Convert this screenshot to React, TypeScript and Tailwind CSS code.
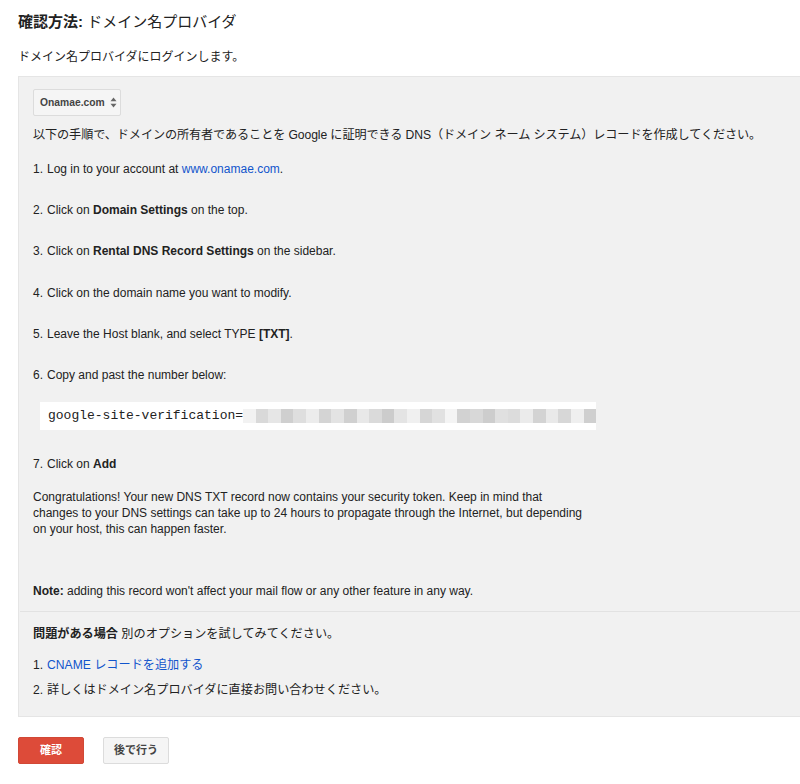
import React from "react";

const FONT = {
  fontFamily:
    '"Liberation Sans", Arial, "Noto Sans CJK JP", sans-serif',
};

const BLUR = [
  "#f2f2f2", "#d9d9d9", "#e6e6e6", "#cfcfcf", "#dedede", "#ececec", "#d4d4d4", "#e3e3e3",
  "#d0d0d0", "#e8e8e8", "#dadada", "#cccccc", "#e4e4e4", "#f0f0f0", "#d6d6d6", "#e1e1e1",
  "#f4f4f4", "#d2d2d2", "#d8d8d8", "#cdcdcd", "#e0e0e0", "#dcdcdc", "#ebebeb", "#d3d3d3",
  "#e9e9e9", "#d7d7d7", "#efefef", "#cfcfcf",
];

function Step({ n, children }: { n: number; children: React.ReactNode }) {
  return (
    <li className="flex h-[17px] items-center">
      <span className="w-[14px] shrink-0">{n}.</span>
      <span>{children}</span>
    </li>
  );
}

export default function App() {
  return (
    <div style={FONT} className="min-h-screen bg-white text-[12px] text-[#222]">
      <div className="pt-[13px] pl-[18px]">
        <h1 className="text-[15px] leading-[18px]">
          <span className="font-bold">確認方法:</span> ドメイン名プロバイダ
        </h1>
        <p className="mt-[18px] text-[12px] leading-[16px]">
          ドメイン名プロバイダにログインします。
        </p>

        <div className="mt-[11px] border border-[#e5e5e5] border-r-0 bg-[#f1f1f1] pb-[18px]">
          <div className="px-[14px] pt-[12px]">
            <div className="flex h-[27px] w-[88px] items-center gap-[5px] rounded-[2px] border border-[#dcdcdc] bg-[#f5f5f5] pl-[6px] text-[10.3px] font-bold text-[#444]">
              Onamae.com
              <svg width="7" height="11" viewBox="0 0 7 11" fill="#666">
                <path d="M3.5 0.5 L6.5 4.3 H0.5 Z" />
                <path d="M3.5 10.5 L6.5 6.7 H0.5 Z" />
              </svg>
            </div>

            <p className="mt-[11px] text-[12.15px] leading-[16px] tracking-[-0.1px]">
              以下の手順で、ドメインの所有者であることを Google に証明できる DNS（ドメイン ネーム システム）レコードを作成してください。
            </p>

            <ol className="mt-[17px] flex flex-col gap-[24.4px]">
              <Step n={1}>
                Log in to your account at{" "}
                <a className="text-[#1155cc]">www.onamae.com</a>.
              </Step>
              <Step n={2}>
                Click on <b>Domain Settings</b> on the top.
              </Step>
              <Step n={3}>
                Click on <b>Rental DNS Record Settings</b> on the sidebar.
              </Step>
              <Step n={4}>Click on the domain name you want to modify.</Step>
              <Step n={5}>
                Leave the Host blank, and select TYPE <b>[TXT]</b>.
              </Step>
              <Step n={6}>Copy and past the number below:</Step>
            </ol>

            <div className="mt-[18px] ml-[7px] flex h-[28px] w-[556px] items-center bg-white pl-[8px]">
              <span
                className="text-[13px] text-[#222]"
                style={{ fontFamily: '"Liberation Mono", "Courier New", monospace' }}
              >
                google-site-verification=
              </span>
              <span className="flex h-[14px] flex-1">
                {BLUR.map((c, i) => (
                  <span key={i} className="h-full flex-1" style={{ background: c }} />
                ))}
              </span>
            </div>

            <div className="mt-[26px] flex h-[17px] items-center">
              <span className="w-[14px] shrink-0">7.</span>
              <span>
                Click on <b>Add</b>
              </span>
            </div>

            <p className="mt-[16px] w-[556px] text-[12px] leading-[16px]">
              Congratulations! Your new DNS TXT record now contains your security token. Keep in mind that changes to your DNS settings can take up to 24 hours to propagate through the Internet, but depending on your host, this can happen faster.
            </p>

            <p className="mt-[46px] text-[12px] leading-[16px]">
              <b>Note:</b> adding this record won't affect your mail flow or any other feature in any way.
            </p>
          </div>

          <div className="mt-[12px] ml-[1px] border-t border-[#e2e2e2]" />

          <div className="px-[14px]">
            <p className="mt-[14px] text-[12.15px] leading-[16px]">
              <b>問題がある場合</b> 別のオプションを試してみてください。
            </p>
            <ol className="mt-[15px] flex flex-col gap-[9px] text-[12.15px]">
              <li className="flex h-[16px] items-center">
                <span className="w-[14px] shrink-0">1.</span>
                <a className="text-[#1155cc]">CNAME レコードを追加する</a>
              </li>
              <li className="flex h-[16px] items-center">
                <span className="w-[14px] shrink-0">2.</span>
                <span>詳しくはドメイン名プロバイダに直接お問い合わせください。</span>
              </li>
            </ol>
          </div>
        </div>

        <div className="mt-[20px] flex gap-[19px]">
          <button className="h-[27px] w-[66px] rounded-[2px] border border-[#d14836] bg-[#dd4b39] text-[11px] font-bold text-white">
            確認
          </button>
          <button className="h-[27px] w-[66px] rounded-[2px] border border-[#dcdcdc] bg-[#f5f5f5] text-[11px] font-bold text-[#444]">
            後で行う
          </button>
        </div>
      </div>
    </div>
  );
}
